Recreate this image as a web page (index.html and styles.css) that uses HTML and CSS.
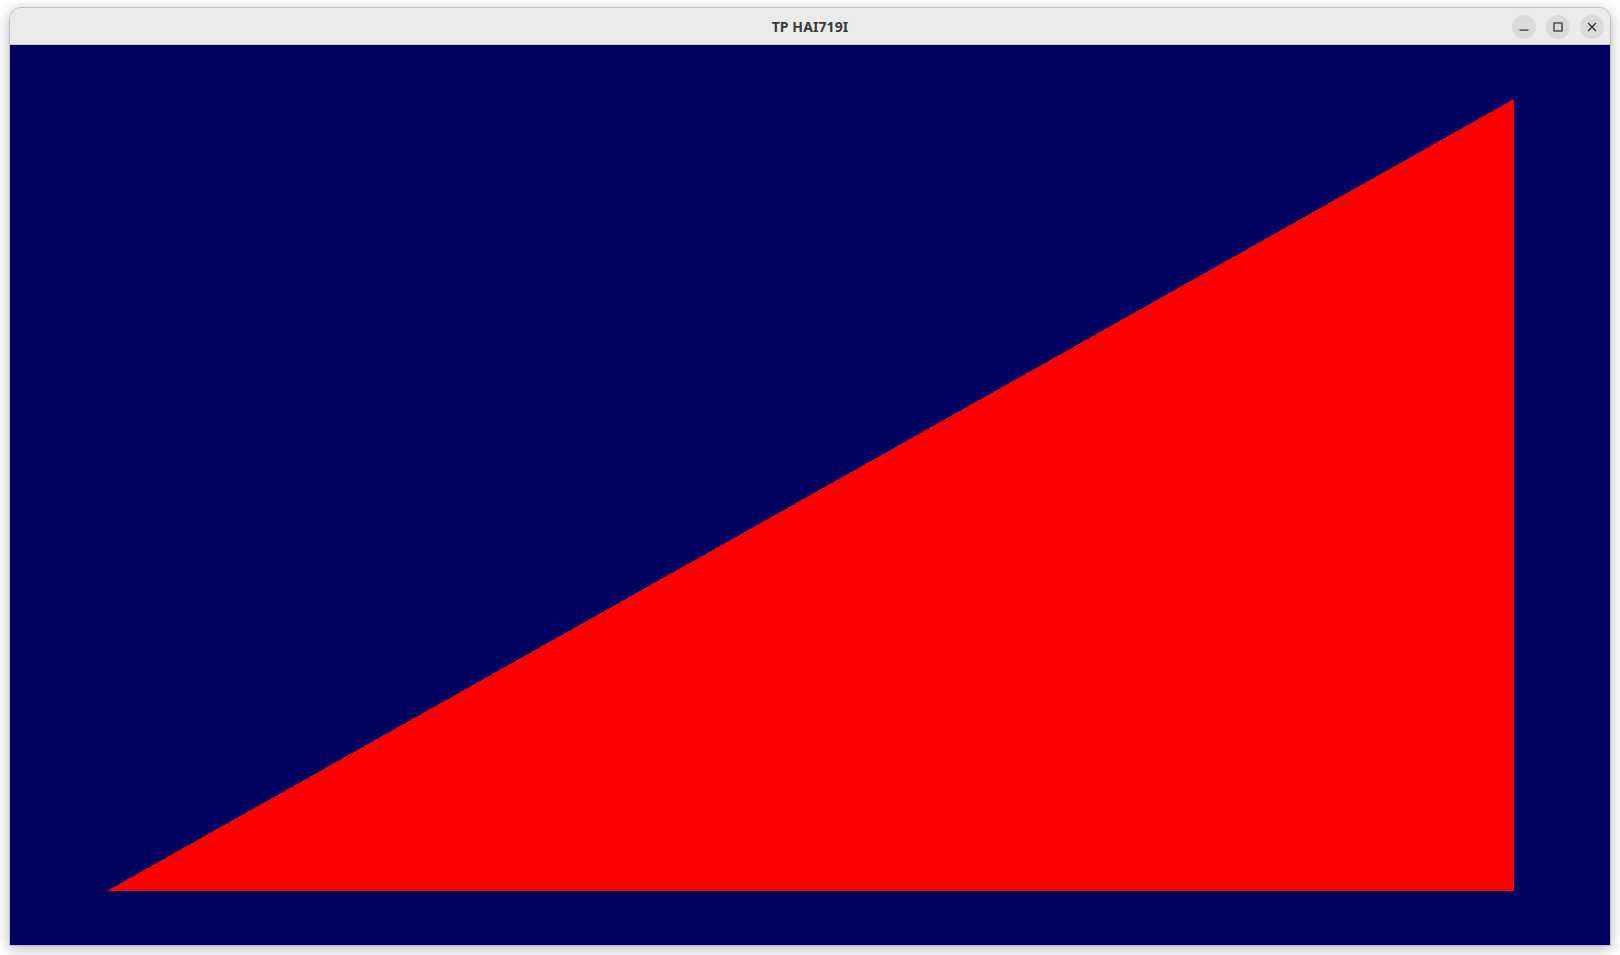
FILE: index.html
```html
<!DOCTYPE html>
<html lang="fr">
<head>
<meta charset="utf-8">
<title>TP HAI719I</title>
<link rel="stylesheet" href="styles.css">
</head>
<body>
<div class="window">
  <header class="titlebar">
    <div class="spacer"></div>
    <div class="title">TP HAI719I</div>
    <div class="controls">
      <button class="ctl" aria-label="Minimiser">
        <svg width="12" height="12" viewBox="0 0 12 12"><rect x="1.5" y="8.5" width="9" height="1.2" fill="#2e2e2e"/></svg>
      </button>
      <button class="ctl" aria-label="Maximiser">
        <svg width="12" height="12" viewBox="0 0 12 12"><rect x="2" y="2" width="8" height="8" fill="none" stroke="#2e2e2e" stroke-width="1.2"/></svg>
      </button>
      <button class="ctl" aria-label="Fermer">
        <svg width="12" height="12" viewBox="0 0 12 12"><path d="M2 2 L10 10 M10 2 L2 10" stroke="#2e2e2e" stroke-width="1.3" fill="none"/></svg>
      </button>
    </div>
  </header>
  <main class="canvas">
    <svg class="scene" width="1600" height="900" viewBox="0 0 1600 900" shape-rendering="crispEdges">
      <polygon points="97,846 1504,846 1504,54" fill="#ff0000"/>
    </svg>
  </main>
</div>
</body>
</html>
```

FILE: styles.css
```css
html, body {
  margin: 0;
  padding: 0;
  background: #ffffff;
}
body {
  width: 1620px;
  height: 955px;
  overflow: hidden;
  font-family: "Noto Sans", "Open Sans", "DejaVu Sans", sans-serif;
}
.window {
  margin: 7px 0 0 9px;
  width: 1600px;
  border: 1px solid #bdbdbd;
  border-radius: 12px 12px 0 0;
  box-shadow: 0 3px 14px rgba(0, 0, 0, 0.28);
  background: #ebebeb;
  overflow: hidden;
}
.titlebar {
  height: 36px;
  border-bottom: 1px solid #cacaca;
  background: #ebebeb;
  display: grid;
  grid-template-columns: 1fr auto 1fr;
  align-items: center;
}
.title {
  font-size: 14px;
  font-weight: 700;
  color: #3a3a3a;
  letter-spacing: 0.1px;
  padding-top: 1px;
}
.controls {
  display: flex;
  justify-content: flex-end;
  gap: 10px;
  padding-right: 6px;
  padding-top: 1px;
}
.ctl {
  width: 24px;
  height: 24px;
  border: none;
  border-radius: 50%;
  background: #dadada;
  padding: 0;
  display: flex;
  align-items: center;
  justify-content: center;
}
.canvas {
  height: 900px;
  background: #000060;
}
.scene {
  display: block;
}
```
